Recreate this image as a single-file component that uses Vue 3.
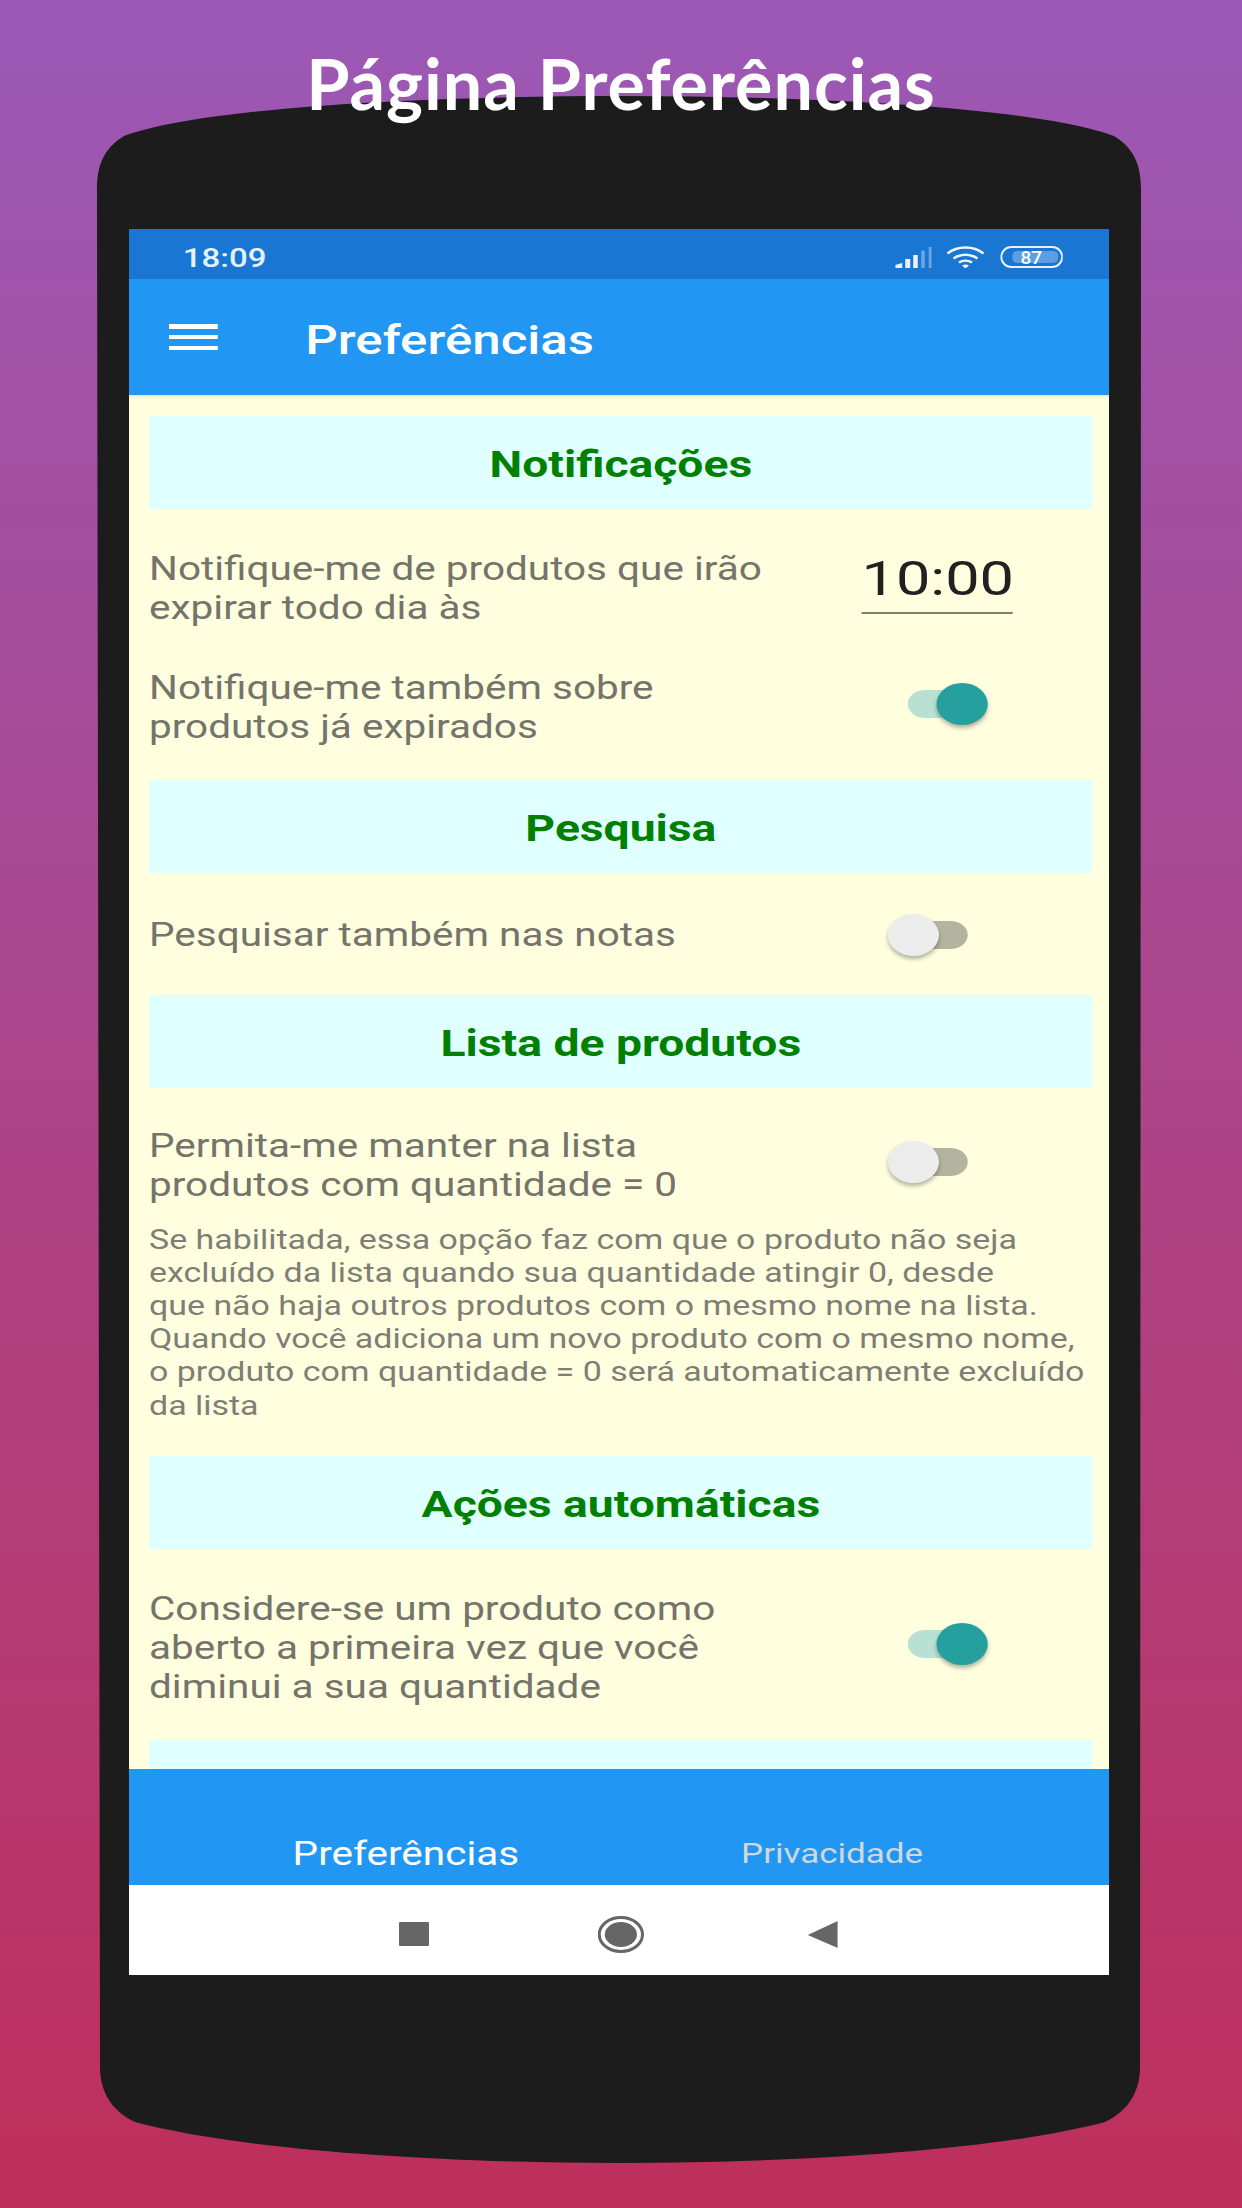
<template>
  <div class="page">
    <svg class="bezel" viewBox="0 0 1242 2208" aria-hidden="true">
      <path d="M97 190C97 166 103 149 124 136C200 108 420 96 620 96C820 96 1040 108 1114 136C1135 149 1141 166 1141 190L1140 2067C1140 2090 1130 2110 1105 2122C1000 2150 800 2163 620 2163C440 2163 240 2150 135 2122C110 2110 100 2090 100 2067Z" fill="#1c1c1c" />
    </svg>

    <h1 class="page-title">Página Preferências</h1>

    <div class="screen">
      <div class="screen-inner">
        <div class="status-bar">
          <span class="clock">18:09</span>
          <div class="status-icons">
            <svg class="ic-signal" viewBox="0 0 37 21" preserveAspectRatio="none">
              <path d="M0 21V18L7 16V21Z" fill="#e8f2fc" />
              <rect x="10" y="12" width="5" height="9" fill="#e8f2fc" />
              <rect x="18" y="8" width="4.5" height="13" fill="#e8f2fc" />
              <rect x="26" y="3.5" width="3.5" height="17.5" fill="#6ba6e6" />
              <rect x="33.5" y="0" width="3.5" height="21" fill="#6ba6e6" />
            </svg>
            <svg class="ic-wifi" viewBox="0 0 38 22" preserveAspectRatio="none">
              <path d="M1 7.5C11 -0.5 27 -0.5 37 7.5M7 12.5C14 7.5 24 7.5 31 12.5" fill="none" stroke="#eef6fd" stroke-width="2.6" />
              <path d="M12.5 16.5C16 14 22 14 25.5 16.5" fill="none" stroke="#eef6fd" stroke-width="2.4" />
              <path d="M15.5 19.5C17.5 18 20.5 18 22.5 19.5L19 22.5Z" fill="#eef6fd" />
            </svg>
            <svg class="ic-battery" viewBox="0 0 63 22" preserveAspectRatio="none">
              <rect x="1" y="1" width="61" height="20" rx="10" fill="none" stroke="#e8f2fc" stroke-width="2" />
              <rect x="12" y="5" width="46" height="12" rx="5" fill="#5c9ee3" />
              <text x="31" y="17.5" text-anchor="middle" class="battery-num">87</text>
            </svg>
          </div>
        </div>

        <header class="app-bar">
          <span class="burger"><i></i><i></i><i></i></span>
          <span class="app-title">Preferências</span>
        </header>

        <main class="content">
          <section v-for="section in sections" :key="section.title" class="section" :class="section.cls">
            <h2 class="section-title">{{ section.title }}</h2>
            <template v-for="row in section.rows" :key="row.text">
              <div class="row" :class="{ 'row--single': row.single, 'row--noted': row.note }">
                <p class="row-text">{{ row.text }}</p>
                <div class="row-control">
                  <div v-if="row.time" class="time-field">{{ row.time }}</div>
                  <span v-else class="switch" :class="{ on: row.on }"><span class="knob"></span></span>
                </div>
              </div>
              <p v-if="row.note" class="row-note">{{ row.note }}</p>
            </template>
          </section>
          <h2 class="section-title"></h2>
        </main>

        <nav class="tabs">
          <span class="tab tab--active">Preferências</span>
          <span class="tab">Privacidade</span>
        </nav>

        <div class="nav-bar">
          <span class="nav-square"></span>
          <svg class="nav-home" viewBox="0 0 46 37" preserveAspectRatio="none">
            <ellipse cx="23" cy="18.5" rx="21.5" ry="17" fill="none" stroke="#666" stroke-width="3" />
            <ellipse cx="23" cy="18.5" rx="16" ry="12.5" fill="#666" />
          </svg>
          <svg class="nav-back" viewBox="0 0 30 27" preserveAspectRatio="none">
            <path d="M30 0V27L0 14Z" fill="#666" />
          </svg>
        </div>
      </div>
    </div>
  </div>
</template>

<script setup>
const note = `Se habilitada, essa opção faz com que o produto não seja
excluído da lista quando sua quantidade atingir 0, desde
que não haja outros produtos com o mesmo nome na lista.
Quando você adiciona um novo produto com o mesmo nome,
o produto com quantidade = 0 será automaticamente excluído
da lista`

const sections = [
  {
    title: 'Notificações',
    rows: [
      { text: 'Notifique-me de produtos que irão expirar todo dia às', time: '10:00' },
      { text: 'Notifique-me também sobre produtos já expirados', on: true },
    ],
  },
  {
    title: 'Pesquisa',
    rows: [{ text: 'Pesquisar também nas notas', on: false, single: true }],
  },
  {
    title: 'Lista de produtos',
    rows: [{ text: 'Permita-me manter na lista produtos com quantidade = 0', on: false, note }],
  },
  {
    title: 'Ações automáticas',
    rows: [{ text: 'Considere-se um produto como aberto a primeira vez que você diminui a sua quantidade', on: true }],
  },
]
</script>

<style>
html, body { margin: 0; padding: 0; }
</style>

<style scoped>
.page {
  position: relative;
  width: 1242px;
  height: 2208px;
  overflow: hidden;
  background: linear-gradient(to bottom, #9b59b6, #be2f5b);
  font-family: Roboto, sans-serif;
}

.bezel {
  position: absolute;
  inset: 0;
  width: 1242px;
  height: 2208px;
}

.page-title {
  position: relative;
  z-index: 2;
  margin: 0;
  height: 229px;
  padding-top: 38px;
  box-sizing: border-box;
  text-align: center;
  font-family: Lato, sans-serif;
  font-size: 70px;
  line-height: 90px;
  letter-spacing: 1px;
  font-weight: 700;
  color: #fff;
}

/* reference content is stretched wide, so the whole screen is drawn narrow and scaled */
.screen {
  position: relative;
  z-index: 1;
  width: 980px;
  height: 1746px;
  margin-left: 129px;
  overflow: hidden;
}

.screen-inner {
  display: flex;
  flex-direction: column;
  width: 784px;
  height: 1746px;
  transform: scaleX(1.25);
  transform-origin: left top;
}

.status-bar {
  display: flex;
  align-items: center;
  justify-content: space-between;
  flex: 0 0 50px;
  box-sizing: border-box;
  padding: 6px 37px 0 43px;
  background: #1976d2;
}

.clock {
  position: relative;
  top: 1px;
  font-size: 26.4px;
  font-weight: 500;
  color: #e3f2fd;
}

.status-icons {
  display: flex;
  align-items: center;
}

.ic-signal { width: 29.6px; height: 21px; }
.ic-wifi { width: 30.4px; height: 22px; margin-left: 12px; }
.ic-battery { width: 50.4px; height: 22px; margin-left: 12px; }

.battery-num {
  font-family: Roboto, sans-serif;
  font-size: 19px;
  font-weight: 500;
  fill: #fff;
}

.app-bar {
  display: flex;
  align-items: center;
  flex: 0 0 116px;
  box-sizing: border-box;
  padding: 5px 0 0 32px;
  background: #2196f3;
}

.burger {
  display: flex;
  flex-direction: column;
  justify-content: space-between;
  width: 39px;
  height: 26px;
  margin: -5px 70px 0 0;
}

.burger i {
  display: block;
  height: 4.5px;
  background: #fff;
}

.app-title {
  font-size: 40.8px;
  font-weight: 500;
  color: #fff;
}

.content {
  flex: 1;
  min-height: 0;
  overflow: hidden;
  padding: 21px 13px 0 16px;
  background: #ffffe0;
  box-shadow: inset 0 4px 4px -3px rgba(0, 0, 0, 0.15);
}

.section {
  padding-bottom: 33px;
}

.section-title {
  height: 93px;
  margin: 0;
  background: #e0ffff;
  color: #008000;
  font-size: 37px;
  line-height: 98px;
  font-weight: 700;
  text-align: center;
}

.row {
  display: flex;
  align-items: center;
  justify-content: space-between;
  margin-top: 41px;
  padding-right: 64px;
}

.row + .row {
  margin-top: 41px;
}

.row--noted {
  margin-top: 38.5px;
}

.row--single {
  margin-bottom: 6px;
}

.row-text {
  width: 495px;
  margin: 0;
  color: #74746a;
  font-size: 32.4px;
  line-height: 39px;
}

.row-control {
  display: flex;
  justify-content: center;
  width: 121px;
}

.time-field {
  width: 121px;
  margin-bottom: 11px;
  padding-bottom: 8px;
  border-bottom: 2px solid #7f7f70;
  color: #212121;
  font-size: 49px;
  line-height: 50px;
  text-align: center;
}

.switch {
  position: relative;
  display: block;
  width: 48px;
  height: 28px;
  margin: 3px 0 11px;
  border-radius: 14px;
  background: #b3b3a0;
}

.row--single .switch {
  margin: 7px 0;
}

.switch.on {
  background: #b8e1d3;
}

.knob {
  position: absolute;
  top: -7px;
  left: -16px;
  width: 41px;
  height: 42px;
  border-radius: 50%;
  background: #ececec;
  box-shadow: 0 3px 4px rgba(0, 0, 0, 0.3);
}

.switch.on .knob {
  left: auto;
  right: -16px;
  background: #26a09f;
}

.row-note {
  margin: 19px 0 0;
  color: #7e7e76;
  font-size: 27.15px;
  line-height: 33.2px;
  white-space: pre-line;
}

.tabs {
  display: flex;
  align-items: flex-end;
  justify-content: center;
  flex: 0 0 116px;
  padding-bottom: 12px;
  box-sizing: border-box;
  background: #2196f3;
}

.tab {
  width: 341px;
  color: #cfd8dc;
  font-size: 28px;
  line-height: 38px;
  text-align: center;
}

.tab--active {
  color: #fff;
  font-size: 32.4px;
}

.nav-bar {
  display: flex;
  align-items: center;
  justify-content: center;
  flex: 0 0 90px;
  box-sizing: border-box;
  padding: 8px 1.2px 0 0;
  background: #fff;
}

.nav-square {
  width: 24px;
  height: 24px;
  border-radius: 1px;
  background: #666;
}

.nav-home {
  width: 37px;
  height: 37px;
  margin-left: 135.6px;
}

.nav-back {
  width: 24px;
  height: 27px;
  margin-left: 131px;
}
</style>
